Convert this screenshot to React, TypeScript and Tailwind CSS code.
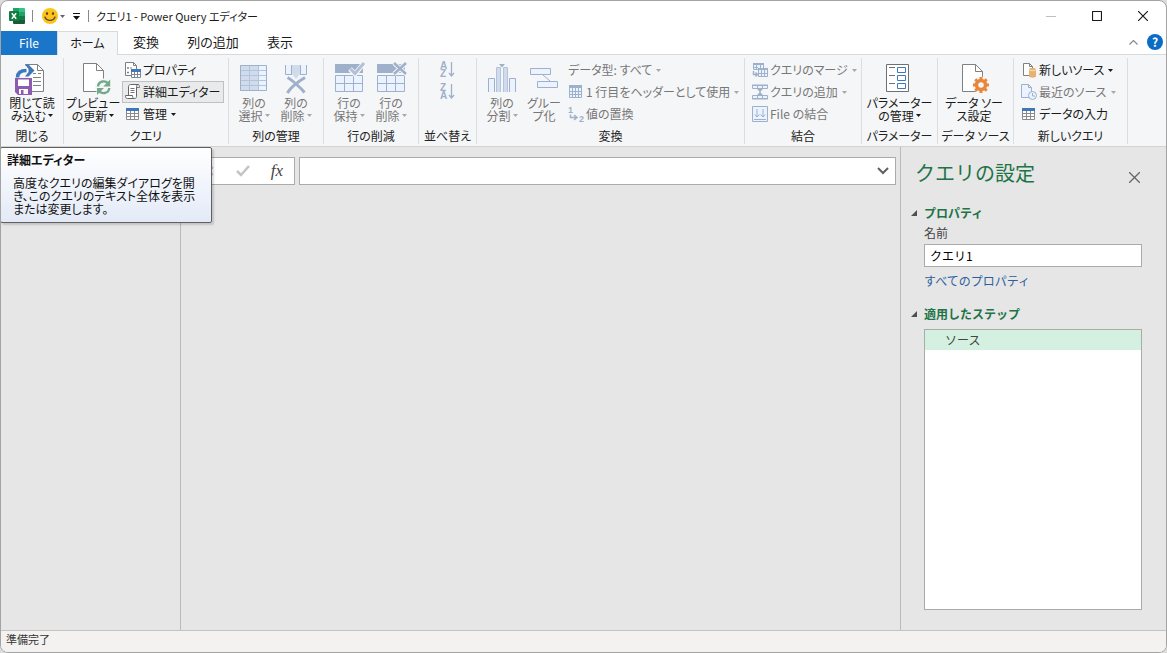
import type { ReactNode } from "react";
import clsx from "clsx";

const OFF_LINE = "#9fb0cb";
const OFF_FILL = "#eaf3ff";

function Caret({ className = "" }: { className?: string }) {
  return (
    <svg width="5" height="3" viewBox="0 0 5 3" className={clsx("inline-block shrink-0", className)}>
      <path d="M0 0h5L2.5 3z" fill="currentColor" />
    </svg>
  );
}

function Icon({ size = 16, width = size, children }: { size?: number; width?: number; children: ReactNode }) {
  return (
    <svg
      width={width}
      height={size}
      viewBox={`0 0 ${width} ${size}`}
      fill="none"
      className="shrink-0 overflow-visible font-['Liberation_Sans',sans-serif]"
    >
      {children}
    </svg>
  );
}

/* ---------- title bar icons ---------- */

function ExcelIcon() {
  return (
    <Icon>
      <path d="M4 0h6v8H4z" fill="#21a366" />
      <path d="M10 0h5a1 1 0 0 1 1 1v3h-6z" fill="#33c481" />
      <path d="M10 4h6v4h-6z" fill="#21a366" />
      <path d="M4 8h6v4H4z" fill="#185c37" />
      <path d="M10 8h6v4h-6z" fill="#107c41" />
      <path d="M4 12h12v3a1 1 0 0 1-1 1H5a1 1 0 0 1-1-1z" fill="#185c37" />
      <rect y="3" width="10" height="10" rx="1" fill="#107c41" />
      <path d="m2.8 5.2 4.4 5.6M7.2 5.2l-4.4 5.6" stroke="#fff" strokeWidth="1.5" />
    </Icon>
  );
}

function SmileIcon() {
  return (
    <Icon>
      <circle cx="8" cy="8" r="8" fill="#fcc419" />
      <ellipse cx="5" cy="5.5" rx="1.1" ry="1.6" fill="#5b4636" />
      <ellipse cx="11" cy="5.5" rx="1.1" ry="1.6" fill="#5b4636" />
      <path d="M3 9c1.5 4.5 8.5 4.5 10 0" stroke="#5b4636" strokeWidth="1.3" strokeLinecap="round" />
    </Icon>
  );
}

/* ---------- large ribbon icons ---------- */

function CloseLoadIcon() {
  return (
    <Icon size={34}>
      <path d="M10.5 3.5v-1h12l6 6v21H17" fill="#fff" stroke="#808080" />
      <path d="M22.5 2.5v6h6" stroke="#808080" />
      <path d="M18 11.5h3M23 11.5h3M18 15.5h8M18 19.5h8M18 23.5h8" stroke="#808080" />
      <path d="M2.5 15.5c0-5 4-7 9-7" stroke="#3e78bb" strokeWidth="3.5" />
      <path d="M10 2.5h3.5l6 6-6 6H10l3.5-4.5v-3z" fill="#3e78bb" />
      <path d="M0 16h17v17H3l-3-3z" fill="#8f5bb0" />
      <path d="M3 17.5h11v6.5H3z" fill="#fff" />
      <path d="M4 27h9v5H4z" fill="#fff" />
      <path d="M6 28h2.5v4H6z" fill="#8f5bb0" />
    </Icon>
  );
}

function RefreshPreviewIcon() {
  return (
    <Icon size={34} width={38}>
      <path d="M9.5 1.5h13l7 7v21h-20z" fill="#fff" stroke="#808080" />
      <path d="M22.5 1.5v7h7" stroke="#808080" />
      <circle cx="29.5" cy="25" r="8.5" fill="#f5f6f7" />
      <path d="M24 24.5c.6-6 8-6.5 10.3-2.5" stroke="#74a98c" strokeWidth="2.4" />
      <path d="M36.2 17.5v7h-7z" fill="#74a98c" />
      <path d="M35.3 26c-.6 6-8 6.5-10.3 2.5" stroke="#74a98c" strokeWidth="2.4" />
      <path d="M23 33v-7h7z" fill="#74a98c" />
    </Icon>
  );
}

function ChooseColumnsIcon() {
  return (
    <Icon size={34}>
      <path d="M3 3h27v26H3z" fill={OFF_FILL} />
      <path d="M3 3h18v26H3z" fill="#d0dbeb" />
      <path d="M3 8.5h27M3 13.5h27M3 18.5h27M3 23.5h27M12.5 3v26M21.5 3v26" stroke="#b4c3dc" />
      <path d="M3.5 3.5h26v25h-26z" stroke={OFF_LINE} />
    </Icon>
  );
}

function RemoveColumnsIcon() {
  return (
    <Icon size={34}>
      <path d="M6.5 3v9.5h6V3M21.5 3v9.5h6V3" fill={OFF_FILL} stroke={OFF_LINE} />
      <path d="M13 3h8v9l-4 5-4-5z" fill="#d0dbeb" />
      <path d="M12.5 3v10M21.5 3v10" stroke={OFF_LINE} />
      <path d="M8.5 15.5C13 18 22 26 25.5 30.5M26 15.5C20 19 11 26 8.5 31" stroke={OFF_LINE} strokeWidth="3" />
    </Icon>
  );
}

function RowsIcon({ mark }: { mark: "keep" | "remove" }) {
  return (
    <Icon size={34}>
      <path d="M3 2h28v9H3z" fill={OFF_LINE} />
      <path d="M3.5 13.5h27v16h-27z" fill={OFF_FILL} stroke={OFF_LINE} />
      <path d="M3 21.5h28M12.5 13v17M21.5 13v17" stroke={OFF_LINE} />
      {mark === "keep" ? (
        <>
          <path d="m18 7 5 5 9-11" stroke="#f5f6f7" strokeWidth="5" />
          <path d="m18.5 7 4.5 4.5L32 1" stroke="#b3c0d6" strokeWidth="3" />
        </>
      ) : (
        <>
          <path d="m20 1 12 11M32 1 20 12" stroke="#f5f6f7" strokeWidth="4.5" />
          <path d="m20 1 12 11M32 1 20 12" stroke={OFF_LINE} strokeWidth="2.5" />
        </>
      )}
    </Icon>
  );
}

function SplitColumnIcon() {
  return (
    <Icon size={34}>
      <path d="M3.5 30V16.5h6V30M24.5 30V16.5h6V30" fill={OFF_FILL} stroke={OFF_LINE} />
      <path d="M12 5h3.5v25H12zM19 5h3.5v25H19z" fill="#d0dbeb" />
      <path d="M11.5 30V5.5h4V30M18.5 30V5.5h4V30" stroke="#b4c3dc" />
      <path d="M14 2h6l-3 3.5z" fill={OFF_LINE} />
    </Icon>
  );
}

function GroupByIcon() {
  return (
    <Icon size={34}>
      <path d="M3.5 6.5h20v6h-20zM10.5 19.5h20v6h-20z" fill={OFF_FILL} stroke={OFF_LINE} />
      <path d="m16 13 7 6" stroke={OFF_LINE} />
    </Icon>
  );
}

function ParametersIcon() {
  return (
    <Icon size={34}>
      <path d="M3.5 2.5h22v27h-22z" fill="#fff" stroke="#707070" />
      <path d="M6 5.5h6M6 13.5h6M6 21.5h6" stroke="#707070" />
      <path d="M14.5 5.5h8v5h-8zM14.5 13.5h8v5h-8zM14.5 21.5h8v5h-8z" stroke="#3e78bb" />
    </Icon>
  );
}

function SourceSettingsIcon() {
  return (
    <Icon size={34}>
      <path d="M5.5 2.5h13l7 7v20h-20z" fill="#fff" stroke="#808080" />
      <path d="M18.5 2.5v7h7" stroke="#808080" />
      <circle cx="24" cy="23" r="8.5" fill="#f5f6f7" />
      <circle cx="24" cy="23" r="4.5" stroke="#e8873a" strokeWidth="3.5" />
      <path
        d="M24 15v3M24 28v3M16 23h3M29 23h3M18.3 17.3l2.2 2.2M27.5 26.5l2.2 2.2M18.3 28.7l2.2-2.2M27.5 19.5l2.2-2.2"
        stroke="#e8873a"
        strokeWidth="3"
      />
    </Icon>
  );
}

/* ---------- small ribbon icons ---------- */

function PropertiesIcon() {
  return (
    <Icon>
      <path d="M.5.5h8l3 3v10H.5z" fill="#fff" stroke="#808080" />
      <path d="M8.5.5v3h3" stroke="#808080" />
      <path d="M2.5 5.5h1v1h-1zM2.5 10h1v1h-1zM5 6h2" stroke="#808080" />
      <path d="M6 7.5h10V16H6z" fill="#fff" />
      <path d="M6 7h10v3H6z" fill="#3e78bb" />
      <path d="M6.5 10v5.5h9V10M6 12.5h10M9.5 10v6M12.5 10v6" stroke="#7d8794" />
    </Icon>
  );
}

function ScriptIcon() {
  return (
    <Icon>
      <path
        d="M3.5 11.5v-9c0-1 1-2 2-2h8c-1.5 0-2 1-2 2v10c0 1.5-1 2-2 2h-7c-1.5 0-2-1-2-3h7c0 2 .5 3 2 3"
        fill="#fff"
        stroke="#666"
      />
      <path d="M11.5 3.5h3v-1c0-1-.5-2-1.5-2M5.5 4.5h4M5.5 6.5h4M5.5 8.5h4" stroke="#777" />
    </Icon>
  );
}

function TableIcon() {
  return (
    <Icon>
      <path d="M1.5 4.5h12v9h-12z" fill="#fff" stroke="#8a8a8a" />
      <path d="M1 2h13v3H1z" fill="#3e78bb" />
      <path d="M1 7.5h13M1 10.5h13M5.5 5v9M9.5 5v9" stroke="#8a8a8a" />
    </Icon>
  );
}

function HeaderRowIcon() {
  return (
    <Icon>
      <path d="M1.5 1.5h12v12h-12z" fill={OFF_FILL} stroke={OFF_LINE} />
      <path d="M1 1h13v3H1z" fill={OFF_LINE} />
      <path d="M1 7.5h13M1 10.5h13M4.5 4v10M7.5 4v10M10.5 4v10" stroke={OFF_LINE} />
    </Icon>
  );
}

function ReplaceIcon() {
  return (
    <Icon>
      <text x="0" y="7" fontSize="9" fontWeight="700" fill={OFF_LINE}>1</text>
      <text x="11" y="16" fontSize="9" fontWeight="700" fill={OFF_LINE}>2</text>
      <path d="M2.5 8.5v3H8M6 9l3 2.5L6 14" stroke={OFF_LINE} strokeWidth="1.5" />
    </Icon>
  );
}

function SortIcon({ first, second }: { first: string; second: string }) {
  return (
    <Icon size={18}>
      <text x="1" y="9" fontSize="10" fontWeight="700" fill={OFF_LINE}>{first}</text>
      <text x="1" y="17" fontSize="10" fontWeight="700" fill={OFF_LINE}>{second}</text>
      <path d="M12.5 2v14M10 13l2.5 3 2.5-3" stroke={OFF_LINE} strokeWidth="1.3" />
    </Icon>
  );
}

function MergeIcon() {
  return (
    <Icon>
      <path d="M1.5 1.5h10v6h-10z" fill={OFF_FILL} stroke={OFF_LINE} />
      <path d="M1 1h11v2H1z" fill={OFF_LINE} />
      <path d="M6.5 7.5h9v7h-9z" fill={OFF_FILL} stroke={OFF_LINE} />
      <path d="M1 5.5h5M4.5 3v4M8.5 3v3M6 11.5h10M9.5 8v7M12.5 8v7" stroke={OFF_LINE} />
      <path d="M6 6h10v2H6z" fill={OFF_LINE} />
      <path d="M1.5 9v3.5H5M3.5 10.5l2 2-2 2" stroke={OFF_LINE} strokeWidth="1.5" />
    </Icon>
  );
}

function AppendIcon() {
  return (
    <Icon>
      <path d="M.5 1.5h15v3H.5zM.5 11.5h15v3H.5z" fill={OFF_FILL} stroke={OFF_LINE} />
      <path d="M0 1h16M0 15h16M5.5 2v2M10.5 2v2M5.5 12v2M10.5 12v2M8 5v6" stroke={OFF_LINE} />
      <path d="M5 5h6L8 8zM5 11h6L8 8z" fill={OFF_LINE} />
    </Icon>
  );
}

function CombineIcon() {
  return (
    <Icon>
      <path d="M.5.5h15v15H.5z" fill={OFF_FILL} stroke={OFF_LINE} />
      <path d="M5 3v8M11 3v8M2.5 8.5 5 11l2.5-2.5M8.5 8.5 11 11l2.5-2.5M2 13.5h12" stroke={OFF_LINE} />
    </Icon>
  );
}

function NewSourceIcon() {
  return (
    <Icon>
      <path d="M2.5 1.5h6l3 3v9h-9z" fill="#fff" stroke="#808080" />
      <path d="M8.5 1.5v3h3" stroke="#808080" />
      <path d="M8 7c0-1.5 7-1.5 7 0v7.5c0 1.5-7 1.5-7 0z" fill="#e6b273" />
      <path d="M8 7.5c0 1.5 7 1.5 7 0" stroke="#f8e6cd" />
    </Icon>
  );
}

function RecentSourceIcon() {
  return (
    <Icon>
      <path d="M.5.5h7l3 3v10H.5z" fill={OFF_FILL} stroke={OFF_LINE} />
      <path d="M7.5.5v3h3" stroke={OFF_LINE} />
      <circle cx="11.5" cy="11.5" r="4" fill={OFF_FILL} stroke={OFF_LINE} />
      <path d="M11.5 9v3H14" stroke={OFF_LINE} />
    </Icon>
  );
}

/* ---------- ribbon building blocks ---------- */

function Group({ label, width, children }: { label: string; width: string; children: ReactNode }) {
  return (
    <section
      aria-label={label}
      className={clsx("flex shrink-0 flex-col border-r border-[#dcdddf]", width)}
    >
      <div className="flex flex-1">{children}</div>
      <div className="text-center leading-4 whitespace-nowrap text-[#222]">{label}</div>
    </section>
  );
}

interface ButtonProps {
  icon?: ReactNode;
  menu?: boolean;
  disabled?: boolean;
}

function LargeButton({ icon, lines, menu, disabled, className }: ButtonProps & { lines: [string, string]; className: string }) {
  return (
    <button
      type="button"
      disabled={disabled}
      className={clsx(
        "flex shrink-0 flex-col items-center pt-1 leading-[13px] whitespace-nowrap",
        disabled ? "text-[#777]" : "text-[#1a1a1a]",
        className,
      )}
    >
      {icon}
      <span>{lines[0]}</span>
      <span className="flex items-center gap-0.5">
        {lines[1]}
        {menu && <Caret className={disabled ? "text-[#a8a8a8]" : ""} />}
      </span>
    </button>
  );
}

function SmallButton({ icon, label, menu, disabled, active }: ButtonProps & { label: string; active?: boolean }) {
  return (
    <button
      type="button"
      disabled={disabled}
      className={clsx(
        "flex h-[22px] items-center gap-0.5 border px-0.5 whitespace-nowrap",
        active ? "border-[#c0c0c0] bg-[#e9eaeb]" : "border-transparent",
        disabled ? "text-[#777]" : "text-[#1a1a1a]",
      )}
    >
      {icon}
      <span>{label}</span>
      {menu && <Caret className={clsx("ml-0.5", disabled && "text-[#a8a8a8]")} />}
    </button>
  );
}

function Ribbon() {
  return (
    <div className="flex h-[92px] shrink-0 overflow-hidden border-b border-[#d2d3d5] bg-[#f5f6f7] pt-[3px] pb-0.5 text-[12px]">
      <Group label="閉じる" width="w-[63px]">
        <LargeButton icon={<CloseLoadIcon />} lines={["閉じて読", "み込む"]} menu className="w-full" />
      </Group>

      <Group label="クエリ" width="w-[165px]">
        <LargeButton icon={<RefreshPreviewIcon />} lines={["プレビュー", "の更新"]} menu className="w-[58px]" />
        <div className="flex flex-col items-start pt-px">
          <SmallButton icon={<PropertiesIcon />} label="プロパティ" />
          <SmallButton icon={<ScriptIcon />} label="詳細エディター" active />
          <SmallButton icon={<TableIcon />} label="管理" menu />
        </div>
      </Group>

      <Group label="列の管理" width="w-[95px]">
        <LargeButton icon={<ChooseColumnsIcon />} lines={["列の", "選択"]} menu disabled className="ml-1 w-[42px]" />
        <LargeButton icon={<RemoveColumnsIcon />} lines={["列の", "削除"]} menu disabled className="w-[42px]" />
      </Group>

      <Group label="行の削減" width="w-[95px]">
        <LargeButton icon={<RowsIcon mark="keep" />} lines={["行の", "保持"]} menu disabled className="ml-1 w-[42px]" />
        <LargeButton icon={<RowsIcon mark="remove" />} lines={["行の", "削除"]} menu disabled className="w-[42px]" />
      </Group>

      <Group label="並べ替え" width="w-[58px]">
        <div className="flex w-full flex-col items-center gap-1 pt-0.5">
          <button type="button" disabled aria-label="昇順で並べ替え">
            <SortIcon first="A" second="Z" />
          </button>
          <button type="button" disabled aria-label="降順で並べ替え">
            <SortIcon first="Z" second="A" />
          </button>
        </div>
      </Group>

      <Group label="変換" width="w-[268px]">
        <LargeButton icon={<SplitColumnIcon />} lines={["列の", "分割"]} menu disabled className="ml-1 w-[42px]" />
        <LargeButton icon={<GroupByIcon />} lines={["グルー", "プ化"]} disabled className="w-[42px]" />
        <div className="flex flex-col items-start pt-px">
          <SmallButton label="データ型: すべて" menu disabled />
          <SmallButton icon={<HeaderRowIcon />} label="1 行目をヘッダーとして使用" menu disabled />
          <SmallButton icon={<ReplaceIcon />} label="値の置換" disabled />
        </div>
      </Group>

      <Group label="結合" width="w-[117px]">
        <div className="ml-1 flex flex-col items-start pt-px">
          <SmallButton icon={<MergeIcon />} label="クエリのマージ" menu disabled />
          <SmallButton icon={<AppendIcon />} label="クエリの追加" menu disabled />
          <SmallButton icon={<CombineIcon />} label="File の結合" disabled />
        </div>
      </Group>

      <Group label="パラメーター" width="w-[76px]">
        <LargeButton icon={<ParametersIcon />} lines={["パラメーター", "の管理"]} menu className="w-full" />
      </Group>

      <Group label="データ ソース" width="w-[76px]">
        <LargeButton icon={<SourceSettingsIcon />} lines={["データ ソー", "ス設定"]} className="w-[72px]" />
      </Group>

      <Group label="新しいクエリ" width="w-[114px]">
        <div className="ml-1 flex flex-col items-start pt-px">
          <SmallButton icon={<NewSourceIcon />} label="新しいソース" menu />
          <SmallButton icon={<RecentSourceIcon />} label="最近のソース" menu disabled />
          <SmallButton icon={<TableIcon />} label="データの入力" />
        </div>
      </Group>
    </div>
  );
}

/* ---------- window chrome ---------- */

function TitleBar() {
  return (
    <header className="flex h-[30px] shrink-0 items-center pl-2">
      <ExcelIcon />
      <span className="ml-[7px] h-3 w-px bg-[#888]" />
      <button type="button" aria-label="フィードバックの送信" className="ml-[9px] flex items-center gap-0.5 text-[#666]">
        <SmileIcon />
        <Caret />
      </button>
      <button type="button" aria-label="クイック アクセス ツール バーのカスタマイズ" className="ml-2">
        <svg width="7" height="7" viewBox="0 0 7 7">
          <path d="M0 0h7v1H0zM0 3h7L3.5 7z" fill="#111" />
        </svg>
      </button>
      <span className="ml-2 h-3 w-px bg-[#888]" />
      <h1 className="ml-[7px] flex-1 truncate text-[11px]">クエリ1 - Power Query エディター</h1>
      <button type="button" aria-label="最小化" className="flex h-full w-[46px] items-center justify-center text-[#c0c0c0]">
        <svg width="10" height="10" viewBox="0 0 10 10" stroke="currentColor">
          <path d="M0 5.5h10" />
        </svg>
      </button>
      <button type="button" aria-label="最大化" className="flex h-full w-[46px] items-center justify-center">
        <svg width="10" height="10" viewBox="0 0 10 10" fill="none" stroke="currentColor">
          <rect x=".5" y=".5" width="9" height="9" rx=".5" strokeWidth="1.2" />
        </svg>
      </button>
      <button type="button" aria-label="閉じる" className="flex h-full w-[46px] items-center justify-center">
        <svg width="10" height="10" viewBox="0 0 10 10" stroke="currentColor">
          <path d="m0 0 10 10M10 0 0 10" strokeWidth="1.2" />
        </svg>
      </button>
    </header>
  );
}

function Tabs() {
  return (
    <nav className="flex h-6 shrink-0 text-[13px]">
      <button type="button" className="w-14 bg-[#1976c8] text-[12px] text-white">
        File
      </button>
      <button
        type="button"
        aria-current="page"
        className="w-[61px] border-x border-t border-[#d8d9db] bg-[#f5f6f7] pb-px text-[12px]"
      >
        ホーム
      </button>
      <div className="flex flex-1 items-center border-b border-[#d8d9db] pb-px">
        <button type="button" className="w-14">変換</button>
        <button type="button" className="w-[78px]">列の追加</button>
        <button type="button" className="w-14">表示</button>
        <button type="button" aria-label="リボンを折りたたむ" className="ml-auto">
          <svg width="9" height="5" viewBox="0 0 9 5" fill="none" stroke="#8a8a8a" strokeWidth="1.2">
            <path d="m.5 4.5 4-4 4 4" />
          </svg>
        </button>
        <button
          type="button"
          aria-label="ヘルプ"
          className="mr-[3px] ml-[9px] flex size-4 items-center justify-center rounded-full bg-[#0a6cc4] text-[12px] leading-4 font-bold text-white"
        >
          ?
        </button>
      </div>
    </nav>
  );
}

function Tooltip() {
  return (
    <div
      role="tooltip"
      className="absolute top-0 -left-px z-10 h-[76px] w-[212px] rounded-[2px] border border-[#606060] bg-linear-to-b from-white to-[#e3eaf7] px-1.5 pt-1 text-[12px] text-[#111] shadow-[2px_2px_2px_rgba(0,0,0,0.15)]"
    >
      <div className="leading-4 font-bold">詳細エディター</div>
      <p className="mt-2 ml-1.5 leading-[13px] whitespace-nowrap">
        高度なクエリの編集ダイアログを開
        <br />
        き、このクエリのテキスト全体を表示
        <br />
        または変更します。
      </p>
    </div>
  );
}

function FormulaBar() {
  return (
    <div className="mx-1 mt-2.5 flex h-7 shrink-0 gap-1">
      <div className="flex w-[110px] items-center border border-[#ababab] bg-white pl-1.5">
        <button type="button" disabled aria-label="キャンセル" className="flex flex-1 justify-center">
          <svg width="10" height="10" viewBox="0 0 10 10" stroke="#c8c8c8" strokeWidth="2">
            <path d="m1 1 8 8M9 1 1 9" />
          </svg>
        </button>
        <button type="button" disabled aria-label="入力" className="flex flex-1 justify-center">
          <svg width="14" height="12" viewBox="0 0 14 12" fill="none" stroke="#c4c4c4" strokeWidth="2.5">
            <path d="m1 6 4 4 8-9" />
          </svg>
        </button>
        <button
          type="button"
          aria-label="数式の挿入"
          className="flex-1 font-['Liberation_Serif',serif] text-[17px] leading-6 text-[#444] italic"
        >
          fx
        </button>
      </div>
      <div className="flex flex-1 items-center border border-[#ababab] bg-white">
        <input aria-label="数式" className="h-full min-w-0 flex-1 px-2 text-[12px] outline-none" />
        <button type="button" aria-label="数式バーの展開" className="px-1.5">
          <svg width="12" height="8" viewBox="0 0 12 8" fill="none" stroke="#606060" strokeWidth="2">
            <path d="m1 1 5 5 5-5" />
          </svg>
        </button>
      </div>
    </div>
  );
}

function SectionTitle({ children }: { children: string }) {
  return (
    <h3 className="flex h-5 items-center gap-[7px] font-bold text-[#217346]">
      <svg width="6" height="6" viewBox="0 0 6 6">
        <path d="M6 0v6H0z" fill="#505050" />
      </svg>
      {children}
    </h3>
  );
}

function SettingsPanel() {
  return (
    <aside className="flex w-[266px] shrink-0 flex-col border-l border-[#bababa] pt-3 pr-6 pb-5 pl-2.5 text-[12px] text-[#444] [font-feature-settings:normal]">
      <div className="flex items-center justify-between pl-1">
        <h2 className="text-[20px] leading-7 text-[#217346]">クエリの設定</h2>
        <button type="button" aria-label="閉じる" className="pt-2 pr-0.5">
          <svg width="11" height="11" viewBox="0 0 11 11" stroke="#666" strokeWidth="1.3">
            <path d="m0 0 11 11M11 0 0 11" />
          </svg>
        </button>
      </div>
      <div className="mt-4">
        <SectionTitle>プロパティ</SectionTitle>
      </div>
      <div className="flex flex-col items-start pl-[13px]">
        <label htmlFor="query-name" className="leading-5">名前</label>
        <input
          id="query-name"
          defaultValue="クエリ1"
          className="mt-px h-[23px] w-full border border-[#ababab] bg-white px-[5px] pb-px text-black outline-none"
        />
        <a href="#properties" className="mt-1 leading-5 text-[#2b5f9e]">すべてのプロパティ</a>
      </div>
      <div className="mt-[13px]">
        <SectionTitle>適用したステップ</SectionTitle>
      </div>
      <ul className="mt-[5px] ml-[13px] flex-1 border border-[#ababab] bg-white">
        <li className="h-5 bg-[#d3f0e0] pl-5 leading-5">ソース</li>
      </ul>
    </aside>
  );
}

export default function App() {
  return (
    <div className="h-screen bg-[#dcdcdc]">
      <div className="flex h-full flex-col overflow-hidden rounded-lg border border-[#a3a3a3] bg-white font-['Noto_Sans_CJK_JP',sans-serif] text-[#1a1a1a] [font-feature-settings:'palt']">
        <TitleBar />
        <Tabs />
        <Ribbon />
        <main className="relative flex min-h-0 flex-1 bg-[#e6e6e6]">
          <Tooltip />
          <nav aria-label="クエリ" className="w-[180px] shrink-0 border-r border-[#bababa]" />
          <div className="flex min-w-0 flex-1 flex-col">
            <FormulaBar />
          </div>
          <SettingsPanel />
        </main>
        <footer className="h-[22px] shrink-0 border-t border-[#c3c3c3] bg-[#f3f2f1] pl-[5px] text-[11px] leading-4 text-[#333]">
          準備完了
        </footer>
      </div>
    </div>
  );
}
